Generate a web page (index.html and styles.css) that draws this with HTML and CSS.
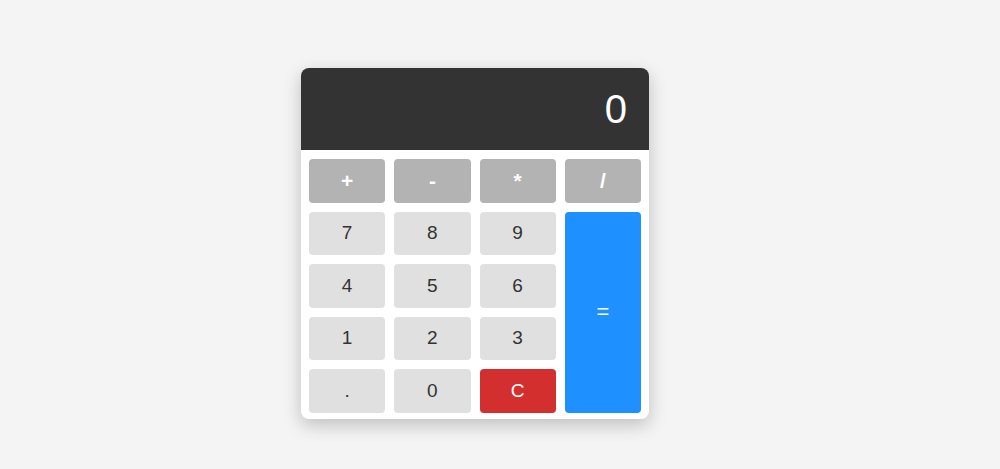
FILE: index.html
```html
<!DOCTYPE html>
<html>
<head>
<meta charset="utf-8">
<link rel="stylesheet" href="styles.css">
</head>
<body>
<div class="calc">
  <div class="display">0</div>
  <div class="keys">
    <button class="key op">+</button>
    <button class="key op">-</button>
    <button class="key op">*</button>
    <button class="key op">/</button>
    <button class="key">7</button>
    <button class="key">8</button>
    <button class="key">9</button>
    <button class="key eq">=</button>
    <button class="key">4</button>
    <button class="key">5</button>
    <button class="key">6</button>
    <button class="key">1</button>
    <button class="key">2</button>
    <button class="key">3</button>
    <button class="key">.</button>
    <button class="key">0</button>
    <button class="key clear">C</button>
  </div>
</div>
</body>
</html>
```
FILE: styles.css
```css
html, body {
  margin: 0;
  padding: 0;
  background: #f4f4f4;
  font-family: "Liberation Sans", Arial, sans-serif;
}
body {
  display: flex;
  justify-content: center;
  padding-top: 68px;
  padding-right: 50px;
  height: 469px;
  box-sizing: border-box;
}
.calc {
  width: 348px;
  height: 351px;
  background: #fff;
  border-radius: 8px;
  box-shadow: 0 6px 18px rgba(0,0,0,0.22);
  overflow: hidden;
}
.display {
  height: 82px;
  background: #333;
  color: #fff;
  font-size: 40px;
  text-align: right;
  box-sizing: border-box;
  padding: 18px 22px 0 0;
  line-height: 46px;
}
.keys {
  display: grid;
  grid-template-columns: repeat(4, 1fr);
  grid-auto-rows: 43.5px;
  gap: 9px;
  padding: 9px 8px 8px 8px;
}
.key {
  border: none;
  border-radius: 4px;
  background: #e0e0e0;
  color: #333;
  font-family: "Liberation Sans", Arial, sans-serif;
  font-size: 19px;
  padding: 0;
}
.op {
  background: #b3b3b3;
  color: #fff;
  font-size: 21px;
  font-weight: bold;
}
.eq {
  grid-column: 4;
  grid-row: 2 / span 4;
  background: #1e90ff;
  color: #fff;
  font-size: 22px;
}
.clear {
  background: #d32f2f;
  color: #fff;
}
```
